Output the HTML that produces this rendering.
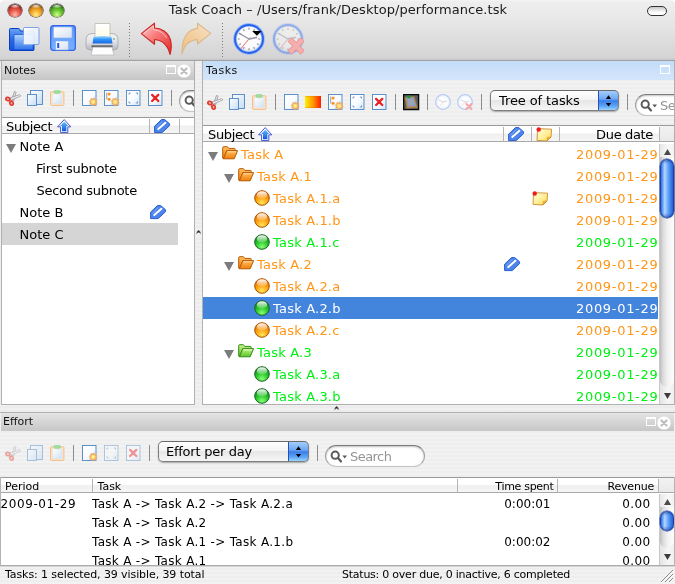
<!DOCTYPE html>
<html><head><meta charset="utf-8"><title>Task Coach</title><style>
*{box-sizing:border-box}
html,body{margin:0;padding:0}
body{width:675px;height:584px;overflow:hidden;position:relative;background:#fff;font-family:"DejaVu Sans","Liberation Sans",sans-serif;font-size:13px;color:#000}
.abs{position:absolute}
.win{will-change:transform;position:absolute;left:0;top:0;width:675px;height:584px;background:repeating-linear-gradient(#f0f0f0 0,#f0f0f0 2px,#ececec 2px,#ececec 4px);border-radius:5px 5px 0 0;overflow:hidden}
.tbar{position:absolute;left:0;top:0;width:675px;height:60px;background:linear-gradient(#f4f4f4 0,#eeeeee 2px,#e7e7e7 22px,#d4d4d4 58px,#c4c4c4 60px)}
.tline{position:absolute;left:0;top:60px;width:675px;height:1px;background:#a2a2a2}
.title{position:absolute;left:.5px;top:2.2px;letter-spacing:.06px;width:675px;text-align:center;font-size:13px;line-height:16px;color:#1a1a1a;white-space:nowrap}
.tl{position:absolute;top:3.9px;width:13.6px;height:13.6px;border-radius:50%}
.cap{position:absolute;height:19px;font-size:11px;line-height:20px;padding-left:2px;color:#111;white-space:nowrap}
.cap.g{background:linear-gradient(#e4e4e4,#c6c6c6)}
.cap.b{background:linear-gradient(#c4dcf8,#d3e5fa)}
.pane{position:absolute;background:#ececec}
.ps{background:repeating-linear-gradient(#f2f2f2 0,#f2f2f2 2px,#eeeeee 2px,#eeeeee 4px)}
.sep{position:absolute;width:1px;height:16px;background:#8c8c8c}
.hdr{position:absolute;background:linear-gradient(#fff 0,#fff 45%,#efefef 55%,#f6f6f6 100%);border-top:1px solid #9a9a9a;border-bottom:1px solid #a8a8a8;white-space:nowrap}
.hsep{position:absolute;top:1px;width:1px;background:#b4b4b4}
.t{position:absolute;white-space:nowrap;line-height:22px;height:22px}
.o{color:#ff9618}.gr{color:#00f014}.w{color:#fff}
.e{position:absolute;white-space:nowrap;font-size:12px;line-height:19px;height:19px}
.r{text-align:right}
.white{position:absolute;background:#fff}
</style></head><body>
<div class="win">
<div class="tbar"></div><div class="tline"></div>
<div class="tl" style="left:8.2px;background:radial-gradient(ellipse 42% 20% at 50% 13%,rgba(255,255,255,.9),rgba(255,255,255,0) 100%),radial-gradient(circle at 50% 82%,#ffb8a8 0,#ea5a4c 38%,#b42c24 72%,#5a1410 100%);box-shadow:0 0 0 .6px rgba(40,20,20,.8),inset 0 1px 1.5px rgba(0,0,0,.45)"></div>
<div class="tl" style="left:29.3px;background:radial-gradient(ellipse 42% 20% at 50% 13%,rgba(255,255,255,.9),rgba(255,255,255,0) 100%),radial-gradient(circle at 50% 82%,#fff08a 0,#f4a828 38%,#c07410 72%,#5a3808 100%);box-shadow:0 0 0 .6px rgba(40,20,20,.8),inset 0 1px 1.5px rgba(0,0,0,.45)"></div>
<div class="tl" style="left:50.2px;background:radial-gradient(ellipse 42% 20% at 50% 13%,rgba(255,255,255,.9),rgba(255,255,255,0) 100%),radial-gradient(circle at 50% 82%,#d0ff90 0,#6cc630 38%,#3a8c1c 72%,#143c0c 100%);box-shadow:0 0 0 .6px rgba(40,20,20,.8),inset 0 1px 1.5px rgba(0,0,0,.45)"></div>
<div class="title">Task Coach – /Users/frank/Desktop/performance.tsk</div>
<div class="abs" style="left:647px;top:6px;width:20px;height:10px;border:1px solid #333;border-radius:5px;background:linear-gradient(#c8c8c8,#fff 70%)"></div>
<svg class="abs" style="left:8px;top:26px;" width="32" height="26" viewBox="0 0 32 26">
<defs><linearGradient id="g1" x1="0" y1="0" x2="0" y2="1"><stop offset="0" stop-color="#6aa4f6"/><stop offset=".5" stop-color="#2c68e4"/><stop offset="1" stop-color="#1450da"/></linearGradient>
<linearGradient id="g2" x1="0" y1="0" x2="0" y2="1"><stop offset="0" stop-color="#b4d4fd"/><stop offset="1" stop-color="#3076ec"/></linearGradient>
<linearGradient id="g3" x1="0" y1="0" x2="1" y2="1"><stop offset="0" stop-color="#ffffff" stop-opacity=".98"/><stop offset="1" stop-color="#dce9fc" stop-opacity=".9"/></linearGradient></defs>
<path d="M1.5 3.5 Q1.5 2.5 2.5 2.5 L10.5 2.5 Q11.5 2.5 11.8 3.5 L12.3 5 L25 5 Q26 5 26 6 L26 23.5 Q26 24.5 25 24.5 L2.5 24.5 Q1.5 24.5 1.5 23.5 Z" fill="url(#g1)" stroke="#0a3ec0" stroke-width="1"/>
<path d="M6 8.5 L25 8.5 L25 23.5 L6 23.5 Z" fill="url(#g2)" stroke="#1c58dc" stroke-width=".8"/>
<rect x="15.5" y="1.5" width="15.5" height="17" rx="1" fill="url(#g3)" stroke="#5d8fe8" stroke-width=".8"/>
<rect x="15.5" y="8.5" width="10" height="10" fill="#eef4fe" opacity=".6"/>
</svg>
<svg class="abs" style="left:50px;top:25px;" width="26" height="26" viewBox="0 0 26 26">
<defs><linearGradient id="g4" x1="0" y1="0" x2="0" y2="1"><stop offset="0" stop-color="#5a98f8"/><stop offset="1" stop-color="#78b2fc"/></linearGradient>
<linearGradient id="g5" x1="0" y1="0" x2="1" y2="1"><stop offset="0" stop-color="#ffffff"/><stop offset="1" stop-color="#d6dff0"/></linearGradient></defs>
<rect x=".7" y=".7" width="24.6" height="24.6" rx="2.5" fill="url(#g4)" stroke="#3564e8" stroke-width="1.3"/>
<rect x="3.5" y="2" width="18.5" height="11" rx="1" fill="url(#g5)" stroke="#88b4f6" stroke-width=".6"/>
<rect x="5.5" y="16" width="13" height="9" fill="url(#g5)" stroke="#7aa6f0" stroke-width=".6"/>
<rect x="7.2" y="18" width="2" height="5" fill="#2458e0"/>
</svg>
<svg class="abs" style="left:84px;top:22px;" width="36" height="34" viewBox="0 0 36 34">
<defs><linearGradient id="g6" x1="0" y1="0" x2="0" y2="1"><stop offset="0" stop-color="#f4f4f6"/><stop offset=".5" stop-color="#e2e3e8"/><stop offset="1" stop-color="#b4b6be"/></linearGradient>
<linearGradient id="g7" x1="0" y1="0" x2="0" y2="1"><stop offset="0" stop-color="#a4dcff"/><stop offset=".45" stop-color="#2f94f6"/><stop offset="1" stop-color="#1a6ae4"/></linearGradient>
<linearGradient id="g8" x1="0" y1="0" x2="0" y2="1"><stop offset="0" stop-color="#ffffff"/><stop offset="1" stop-color="#fdfbe4"/></linearGradient></defs>
<path d="M2 18 Q2 11.5 9 11.5 L27 11.5 Q34 11.5 34 18 L34 24 Q34 28 30 28 L6 28 Q2 28 2 24 Z" fill="url(#g6)" stroke="#a9abb4" stroke-width=".9"/>
<path d="M11 1.5 L26 1.5 L26 16 L11 16 Z" fill="url(#g8)" stroke="#b9b9b0" stroke-width=".8"/>
<path d="M9.5 15 Q18.5 13 27.5 15 L28.5 21.5 L8.5 21.5 Z" fill="url(#g7)"/>
<rect x="7.5" y="23.4" width="21" height="1.8" fill="#55555a"/>
<path d="M9 25.2 L28 25.2 L30 33 L7 33 Z" fill="#fdfdfd" stroke="#bcbcc2" stroke-width=".8"/>
<circle cx="30" cy="17" r=".9" fill="#7fb08a"/>
</svg>
<div class="abs" style="left:129px;top:23px;width:1px;height:36px;background:repeating-linear-gradient(#7a7a7a 0,#7a7a7a 1px,transparent 1px,transparent 3px)"></div>
<div class="abs" style="left:222px;top:23px;width:1px;height:36px;background:repeating-linear-gradient(#7a7a7a 0,#7a7a7a 1px,transparent 1px,transparent 3px)"></div>
<svg class="abs" style="left:139px;top:21px;" width="36" height="36" viewBox="0 0 36 36">
<defs><linearGradient id="g9" x1="0" y1="0" x2="1" y2="1"><stop offset="0" stop-color="#ffd2d2"/><stop offset=".4" stop-color="#f98080"/><stop offset="1" stop-color="#e22626"/></linearGradient></defs>
<path d="M2.3 12.6 L15.5 2.2 L15.5 7 C22 7 29 11 31.5 19 C32.8 24 32.4 29 31 33.5 C29.5 27 25.5 19.5 15.5 18.5 L15.5 23.2 Z" fill="url(#g9)" stroke="#cc2422" stroke-width="1.1" stroke-linejoin="round"/>
<path d="M4.6 12.5 L14.3 4.9 L14.3 8.8 C20 9 25 12 27.5 17" fill="none" stroke="#ffd4d4" stroke-width="1" opacity=".8"/>
</svg>
<svg class="abs" style="left:177px;top:21px;" width="36" height="36" viewBox="0 0 36 36">
<defs><linearGradient id="g10" x1="1" y1="0" x2="0" y2="1"><stop offset="0" stop-color="#f4e2cc"/><stop offset=".5" stop-color="#f4cf9f"/><stop offset="1" stop-color="#f0c080"/></linearGradient></defs>
<path d="M33.7 12.4 L20.5 2.2 L20.5 7.6 C12 8 4.5 15 5 33 C7 24.5 11.5 19 20.5 18.6 L20.5 23 Z" fill="url(#g10)" stroke="#dcb888" stroke-width="1.1" stroke-linejoin="round"/>
</svg>
<svg class="abs" style="left:233px;top:23px;" width="32" height="32" viewBox="0 0 32 32"><defs><radialGradient id="g11" cx=".5" cy=".4" r=".6"><stop offset="0" stop-color="#ffffff"/><stop offset=".8" stop-color="#fafafc"/><stop offset="1" stop-color="#d6dcea"/></radialGradient></defs>
<g>
<circle cx="16" cy="16" r="15.9" fill="#9dbcf8"/>
<circle cx="16" cy="16" r="15" fill="#2a63ea"/>
<circle cx="16" cy="16" r="13.1" fill="#7eaaf8"/>
<circle cx="16" cy="16" r="12.4" fill="url(#g11)"/>
<line x1="16.00" y1="4.80" x2="16.00" y2="6.70" stroke="#8a8a92" stroke-width="1.1"/><line x1="21.60" y1="6.30" x2="20.65" y2="7.95" stroke="#8a8a92" stroke-width="1.1"/><line x1="25.70" y1="10.40" x2="24.05" y2="11.35" stroke="#8a8a92" stroke-width="1.1"/><line x1="27.20" y1="16.00" x2="25.30" y2="16.00" stroke="#8a8a92" stroke-width="1.1"/><line x1="25.70" y1="21.60" x2="24.05" y2="20.65" stroke="#8a8a92" stroke-width="1.1"/><line x1="21.60" y1="25.70" x2="20.65" y2="24.05" stroke="#8a8a92" stroke-width="1.1"/><line x1="16.00" y1="27.20" x2="16.00" y2="25.30" stroke="#8a8a92" stroke-width="1.1"/><line x1="10.40" y1="25.70" x2="11.35" y2="24.05" stroke="#8a8a92" stroke-width="1.1"/><line x1="6.30" y1="21.60" x2="7.95" y2="20.65" stroke="#8a8a92" stroke-width="1.1"/><line x1="4.80" y1="16.00" x2="6.70" y2="16.00" stroke="#8a8a92" stroke-width="1.1"/><line x1="6.30" y1="10.40" x2="7.95" y2="11.35" stroke="#8a8a92" stroke-width="1.1"/><line x1="10.40" y1="6.30" x2="11.35" y2="7.95" stroke="#8a8a92" stroke-width="1.1"/>
<line x1="16" y1="16" x2="5.8" y2="10" stroke="#8e8ea6" stroke-width="1.3"/>
<line x1="16" y1="16" x2="24" y2="14.4" stroke="#9a9aae" stroke-width="1.6"/>
<line x1="17.2" y1="14.4" x2="7.8" y2="25.8" stroke="#f26a6a" stroke-width="1"/>
<circle cx="16" cy="16" r="1.2" fill="#a0a0b0"/>
</g><path d="M19.2 8 L28.6 8 L23.9 12.8 Z" fill="#000"/></svg>
<svg class="abs" style="left:272.3px;top:23px;" width="32" height="32" viewBox="0 0 32 32"><defs><radialGradient id="g12" cx=".5" cy=".4" r=".6"><stop offset="0" stop-color="#ffffff"/><stop offset=".8" stop-color="#fafafc"/><stop offset="1" stop-color="#d6dcea"/></radialGradient></defs>
<g opacity=".42">
<circle cx="16" cy="16" r="15.9" fill="#9dbcf8"/>
<circle cx="16" cy="16" r="15" fill="#2a63ea"/>
<circle cx="16" cy="16" r="13.1" fill="#7eaaf8"/>
<circle cx="16" cy="16" r="12.4" fill="url(#g12)"/>
<line x1="16.00" y1="4.80" x2="16.00" y2="6.70" stroke="#8a8a92" stroke-width="1.1"/><line x1="21.60" y1="6.30" x2="20.65" y2="7.95" stroke="#8a8a92" stroke-width="1.1"/><line x1="25.70" y1="10.40" x2="24.05" y2="11.35" stroke="#8a8a92" stroke-width="1.1"/><line x1="27.20" y1="16.00" x2="25.30" y2="16.00" stroke="#8a8a92" stroke-width="1.1"/><line x1="25.70" y1="21.60" x2="24.05" y2="20.65" stroke="#8a8a92" stroke-width="1.1"/><line x1="21.60" y1="25.70" x2="20.65" y2="24.05" stroke="#8a8a92" stroke-width="1.1"/><line x1="16.00" y1="27.20" x2="16.00" y2="25.30" stroke="#8a8a92" stroke-width="1.1"/><line x1="10.40" y1="25.70" x2="11.35" y2="24.05" stroke="#8a8a92" stroke-width="1.1"/><line x1="6.30" y1="21.60" x2="7.95" y2="20.65" stroke="#8a8a92" stroke-width="1.1"/><line x1="4.80" y1="16.00" x2="6.70" y2="16.00" stroke="#8a8a92" stroke-width="1.1"/><line x1="6.30" y1="10.40" x2="7.95" y2="11.35" stroke="#8a8a92" stroke-width="1.1"/><line x1="10.40" y1="6.30" x2="11.35" y2="7.95" stroke="#8a8a92" stroke-width="1.1"/>
<line x1="16" y1="16" x2="5.8" y2="10" stroke="#8e8ea6" stroke-width="1.3"/>
<line x1="16" y1="16" x2="24" y2="14.4" stroke="#9a9aae" stroke-width="1.6"/>
<line x1="17.2" y1="14.4" x2="7.8" y2="25.8" stroke="#f26a6a" stroke-width="1"/>
<circle cx="16" cy="16" r="1.2" fill="#a0a0b0"/>
</g><path d="M17.6 16.4 L30.8 29.6 M30.8 16.4 L17.6 29.6" stroke="#e99494" stroke-width="5.8"/><path d="M18 16.8 L30.4 29.2 M30.4 16.8 L18 29.2" stroke="#f4aeae" stroke-width="4.2"/></svg>
<div class="abs ps" style="left:1px;top:61px;width:194px;height:344px;border-left:1px solid #b0b0b0;border-right:1px solid #b0b0b0;border-bottom:1px solid #b0b0b0"></div>
<div class="cap g" style="left:2px;top:61px;width:192px">Notes</div>
<div class="abs" style="left:166px;top:65px;width:9.5px;height:8.5px;border:1px solid #fff;border-top-width:2px;opacity:.95"></div><svg class="abs" style="left:177px;top:63.5px;" width="14" height="14" viewBox="0 0 14 14"><circle cx="7" cy="7" r="6.6" fill="#fff"/><path d="M4.4 4.4 L9.6 9.6 M9.6 4.4 L4.4 9.6" stroke="#bdbdbd" stroke-width="2.1" stroke-linecap="round"/></svg>
<svg class="abs" style="left:5px;top:90px;" width="17" height="17" viewBox="0 0 17 17"><g>
<path d="M6.2 11.4 L9.4 1.6 Q10.6 1.2 11 2.4 L8.6 11 Z" fill="#e4e4e8" stroke="#8a8a92" stroke-width=".7" stroke-linejoin="round"/>
<path d="M4.4 8.2 L14.6 4.6 Q15.8 5 15.4 6.2 L6 10.2 Z" fill="#f0f0f2" stroke="#8a8a92" stroke-width=".7" stroke-linejoin="round"/>
<ellipse cx="2.9" cy="9" rx="1.6" ry="2.1" transform="rotate(-65 2.9 9)" fill="#f6b0a4" stroke="#de4034" stroke-width="1.7"/>
<ellipse cx="6.5" cy="13.2" rx="1.7" ry="2" transform="rotate(-20 6.5 13.2)" fill="#f6b0a4" stroke="#de4034" stroke-width="1.7"/>
</g></svg>
<svg class="abs" style="left:27px;top:90px;" width="17" height="17" viewBox="0 0 17 17"><defs><linearGradient id="g13" x1="0" y1="0" x2="1" y2="1"><stop offset="0" stop-color="#ffffff"/><stop offset="1" stop-color="#c4dcf4"/></linearGradient></defs><g>
<rect x="3.5" y=".5" width="12" height="14" fill="url(#g13)" stroke="#4d86c4" stroke-width=".9"/>
<rect x=".5" y="4.5" width="9" height="11" fill="url(#g13)" stroke="#4d86c4" stroke-width=".9"/></g></svg>
<svg class="abs" style="left:50px;top:90px;" width="15" height="17" viewBox="0 0 15 17"><defs><linearGradient id="g14" x1="0" y1="0" x2="1" y2="1"><stop offset="0" stop-color="#ffffff"/><stop offset="1" stop-color="#cfe0f4"/></linearGradient></defs>
<rect x=".6" y="1.8" width="13.3" height="13.6" rx=".8" fill="#fde6cc" stroke="#f3bc84" stroke-width="1"/>
<rect x="2.6" y="4" width="9.4" height="9.6" fill="url(#g14)" stroke="#d8e2ee" stroke-width=".5"/>
<rect x="4.2" y=".4" width="6" height="2.9" rx="1" fill="#9ce29e" stroke="#74cc7c" stroke-width=".5"/></svg>
<div class="sep" style="left:73px;top:90px"></div>
<svg class="abs" style="left:82px;top:90px;" width="18" height="18" viewBox="0 0 18 18"><defs><linearGradient id="g15" x1="0" y1="0" x2="1" y2="1"><stop offset="0" stop-color="#ffffff"/><stop offset=".55" stop-color="#f8fbff"/><stop offset="1" stop-color="#cfe2f6"/></linearGradient></defs><rect x=".5" y=".5" width="13.5" height="15" fill="url(#g15)" stroke="#4d86c4" stroke-width=".9"/><defs><radialGradient id="g16"><stop offset="0" stop-color="#ffff9a"/><stop offset=".38" stop-color="#fde07a"/><stop offset=".6" stop-color="#f4b060"/><stop offset="1" stop-color="#f0a868"/></radialGradient></defs><polygon points="12.02,7.68 12.91,9.31 14.76,9.50 14.24,11.28 15.42,12.72 13.79,13.61 13.60,15.46 11.82,14.94 10.38,16.12 9.49,14.49 7.64,14.30 8.16,12.52 6.98,11.08 8.61,10.19 8.80,8.34 10.58,8.86" fill="url(#g16)" stroke="#eeaa6c" stroke-width=".4" stroke-linejoin="round"/></svg>
<svg class="abs" style="left:104px;top:90px;" width="18" height="18" viewBox="0 0 18 18"><defs><linearGradient id="g17" x1="0" y1="0" x2="1" y2="1"><stop offset="0" stop-color="#ffffff"/><stop offset=".55" stop-color="#f8fbff"/><stop offset="1" stop-color="#cfe2f6"/></linearGradient></defs><rect x=".5" y=".5" width="13.5" height="15" fill="url(#g17)" stroke="#4d86c4" stroke-width=".9"/><path d="M2.7 2.6 L2.7 9.6" fill="none" stroke="#a4a4a4" stroke-width="1.1"/><circle cx="5.1" cy="3.9" r="1.5" fill="#f8921c"/><circle cx="5.1" cy="9.3" r="1.5" fill="#f8921c"/><defs><radialGradient id="g18"><stop offset="0" stop-color="#ffff9a"/><stop offset=".38" stop-color="#fde07a"/><stop offset=".6" stop-color="#f4b060"/><stop offset="1" stop-color="#f0a868"/></radialGradient></defs><polygon points="12.02,7.68 12.91,9.31 14.76,9.50 14.24,11.28 15.42,12.72 13.79,13.61 13.60,15.46 11.82,14.94 10.38,16.12 9.49,14.49 7.64,14.30 8.16,12.52 6.98,11.08 8.61,10.19 8.80,8.34 10.58,8.86" fill="url(#g18)" stroke="#eeaa6c" stroke-width=".4" stroke-linejoin="round"/></svg>
<svg class="abs" style="left:126px;top:90px;" width="16" height="17" viewBox="0 0 16 17"><defs><linearGradient id="g19" x1="0" y1="0" x2="1" y2="1"><stop offset="0" stop-color="#ffffff"/><stop offset=".55" stop-color="#f8fbff"/><stop offset="1" stop-color="#cfe2f6"/></linearGradient></defs><g><rect x=".5" y=".5" width="13.5" height="15" fill="url(#g19)" stroke="#4d86c4" stroke-width=".9"/><path d="M3 4.6 L3 3 L4.6 3 M9.9 3 L11.5 3 L11.5 4.6 M3 11.4 L3 13 L4.6 13 M9.9 13 L11.5 13 L11.5 11.4" fill="none" stroke="#44689a" stroke-width=".8" opacity=".8"/></g></svg>
<svg class="abs" style="left:148px;top:90px;" width="16" height="17" viewBox="0 0 16 17"><defs><linearGradient id="g20" x1="0" y1="0" x2="1" y2="1"><stop offset="0" stop-color="#ffffff"/><stop offset=".55" stop-color="#f8fbff"/><stop offset="1" stop-color="#cfe2f6"/></linearGradient></defs><g><rect x=".5" y=".5" width="13.5" height="15" fill="url(#g20)" stroke="#4d86c4" stroke-width=".9"/><path d="M4.1 4.9 L10.3 11 M10.3 4.9 L4.1 11" stroke="#ea2424" stroke-width="2.3" stroke-linecap="round"/></g></svg>
<div class="sep" style="left:171px;top:90px"></div>
<div class="abs" style="left:179px;top:90px;width:30px;height:22px;;width:15px;overflow:hidden"><div class="abs" style="left:0;top:0;width:30px;height:22px;border-radius:11px;border:1px solid #a0a0a0;border-top-color:#7c7c7c;border-bottom-color:#c4c4c4;background:#fff;box-shadow:inset 0 1px 2px rgba(0,0,0,.25)"></div><svg class="abs" style="left:4.5px;top:4.5px;" width="18" height="14" viewBox="0 0 18 14"><circle cx="5.2" cy="5.2" r="3.6" fill="none" stroke="#5a5a5a" stroke-width="2"/><path d="M7.8 7.8 L11 11.4" stroke="#5a5a5a" stroke-width="2.2" stroke-linecap="round"/><path d="M12.4 5.6 L17 5.6 L14.7 8.4 Z" fill="#5a5a5a"/></svg></div>
<div class="white" style="left:2px;top:117px;width:192px;height:287px"></div>
<div class="hdr" style="left:2px;top:117px;width:192px;height:17px"><span class="abs" style="left:4px;top:.5px;line-height:16px;letter-spacing:-.35px">Subject</span><div class="hsep" style="left:147px;height:15px"></div><div class="hsep" style="left:177px;height:15px"></div></div>
<svg class="abs" style="left:57px;top:119px;" width="15" height="15" viewBox="0 0 15 15"><defs><linearGradient id="g21" x1="0" y1="0" x2="0" y2="1"><stop offset="0" stop-color="#5cbcff"/><stop offset="1" stop-color="#0c58dc"/></linearGradient></defs>
<path d="M7.2 .6 L13.8 7.8 L10.8 7.8 L10.8 13.6 L3.6 13.6 L3.6 7.8 L.6 7.8 Z" fill="#fff" stroke="#4452d4" stroke-width="1" stroke-linejoin="round"/>
<path d="M7.2 2.8 L11.2 7 L9.4 7 L9.4 12.2 L5 12.2 L5 7 L3.2 7 Z" fill="url(#g21)"/></svg>
<svg class="abs" style="left:153.7px;top:119px" width="17" height="14" viewBox="0 0 17 14"><path d="M.6 13.6 L.6 7.2 L7.6 .5 L10.6 .5 L15.6 4.8 L15.6 6.6 L8.2 13.6 Z" fill="#4c84ea" stroke="#2a5cd2" stroke-width="1" stroke-linejoin="round"/>
<path d="M4.3 10.1 L11.4 3.7" stroke="#fff" stroke-width="2" stroke-linecap="round"/>
<path d="M2.4 8.4 L8.2 2.6" stroke="#8cb4f4" stroke-width=".8"/></svg>
<div class="abs" style="left:2px;top:223px;width:176px;height:22px;background:#d5d5d5"></div>
<svg class="abs" style="left:6px;top:144px;" width="10" height="9" viewBox="0 0 10 9"><path d="M0 0 L10 0 L5 9 Z" fill="#7c7c7c"/></svg>
<div class="t" style="left:19.5px;top:135.5px;letter-spacing:0px">Note A</div>
<div class="t" style="left:36px;top:157.5px;letter-spacing:-0.25px">First subnote</div>
<div class="t" style="left:36.5px;top:179.5px;letter-spacing:-0.3px">Second subnote</div>
<div class="t" style="left:19.5px;top:201.5px;letter-spacing:0px">Note B</div>
<div class="t" style="left:19.5px;top:223.5px;letter-spacing:0px">Note C</div>
<svg class="abs" style="left:150px;top:205px" width="17" height="15" viewBox="0 0 17 15"><path d="M.6 13.6 L.6 7.2 L7.6 .5 L10.6 .5 L15.6 4.8 L15.6 6.6 L8.2 13.6 Z" fill="#4c84ea" stroke="#2a5cd2" stroke-width="1" stroke-linejoin="round"/>
<path d="M4.3 10.1 L11.4 3.7" stroke="#fff" stroke-width="2" stroke-linecap="round"/>
<path d="M2.4 8.4 L8.2 2.6" stroke="#8cb4f4" stroke-width=".8"/></svg>
<svg class="abs" style="left:196px;top:229.4px;" width="6" height="6" viewBox="0 0 6 6"><path d="M.6 4.4 Q2.6 -1.4 4.6 4.4 Q2.6 2.2 .6 4.4 Z" fill="#2a2a2a" stroke="#2a2a2a" stroke-width=".5"/><path d="M1 5.4 Q2.6 4 4.4 5.4" fill="none" stroke="#fff" stroke-width=".8"/></svg>
<div class="abs ps" style="left:202px;top:61px;width:473px;height:344px;border-left:1px solid #b0b0b0;border-right:1px solid #b0b0b0;border-bottom:1px solid #b0b0b0"></div>
<div class="cap b" style="left:203px;top:61px;width:471px;padding-left:3px;letter-spacing:.45px">Tasks</div>
<div class="abs" style="left:660px;top:65px;width:9.5px;height:8.5px;border:1px solid #fff;border-top-width:2px;opacity:.95"></div>
<svg class="abs" style="left:207px;top:94px;" width="17" height="17" viewBox="0 0 17 17"><g>
<path d="M6.2 11.4 L9.4 1.6 Q10.6 1.2 11 2.4 L8.6 11 Z" fill="#e4e4e8" stroke="#8a8a92" stroke-width=".7" stroke-linejoin="round"/>
<path d="M4.4 8.2 L14.6 4.6 Q15.8 5 15.4 6.2 L6 10.2 Z" fill="#f0f0f2" stroke="#8a8a92" stroke-width=".7" stroke-linejoin="round"/>
<ellipse cx="2.9" cy="9" rx="1.6" ry="2.1" transform="rotate(-65 2.9 9)" fill="#f6b0a4" stroke="#de4034" stroke-width="1.7"/>
<ellipse cx="6.5" cy="13.2" rx="1.7" ry="2" transform="rotate(-20 6.5 13.2)" fill="#f6b0a4" stroke="#de4034" stroke-width="1.7"/>
</g></svg>
<svg class="abs" style="left:229px;top:94px;" width="17" height="17" viewBox="0 0 17 17"><defs><linearGradient id="g22" x1="0" y1="0" x2="1" y2="1"><stop offset="0" stop-color="#ffffff"/><stop offset="1" stop-color="#c4dcf4"/></linearGradient></defs><g>
<rect x="3.5" y=".5" width="12" height="14" fill="url(#g22)" stroke="#4d86c4" stroke-width=".9"/>
<rect x=".5" y="4.5" width="9" height="11" fill="url(#g22)" stroke="#4d86c4" stroke-width=".9"/></g></svg>
<svg class="abs" style="left:252px;top:94px;" width="15" height="17" viewBox="0 0 15 17"><defs><linearGradient id="g23" x1="0" y1="0" x2="1" y2="1"><stop offset="0" stop-color="#ffffff"/><stop offset="1" stop-color="#cfe0f4"/></linearGradient></defs>
<rect x=".6" y="1.8" width="13.3" height="13.6" rx=".8" fill="#fde6cc" stroke="#f3bc84" stroke-width="1"/>
<rect x="2.6" y="4" width="9.4" height="9.6" fill="url(#g23)" stroke="#d8e2ee" stroke-width=".5"/>
<rect x="4.2" y=".4" width="6" height="2.9" rx="1" fill="#9ce29e" stroke="#74cc7c" stroke-width=".5"/></svg>
<div class="sep" style="left:275px;top:94px"></div>
<svg class="abs" style="left:284px;top:94px;" width="18" height="18" viewBox="0 0 18 18"><defs><linearGradient id="g24" x1="0" y1="0" x2="1" y2="1"><stop offset="0" stop-color="#ffffff"/><stop offset=".55" stop-color="#f8fbff"/><stop offset="1" stop-color="#cfe2f6"/></linearGradient></defs><rect x=".5" y=".5" width="13.5" height="15" fill="url(#g24)" stroke="#4d86c4" stroke-width=".9"/><defs><radialGradient id="g25"><stop offset="0" stop-color="#ffff9a"/><stop offset=".38" stop-color="#fde07a"/><stop offset=".6" stop-color="#f4b060"/><stop offset="1" stop-color="#f0a868"/></radialGradient></defs><polygon points="12.02,7.68 12.91,9.31 14.76,9.50 14.24,11.28 15.42,12.72 13.79,13.61 13.60,15.46 11.82,14.94 10.38,16.12 9.49,14.49 7.64,14.30 8.16,12.52 6.98,11.08 8.61,10.19 8.80,8.34 10.58,8.86" fill="url(#g25)" stroke="#eeaa6c" stroke-width=".4" stroke-linejoin="round"/></svg>
<div class="abs" style="left:305px;top:96px;width:16px;height:12px;background:linear-gradient(rgba(200,90,0,.35),rgba(255,255,255,0) 12%,rgba(255,255,255,0) 88%,rgba(200,90,0,.35)),linear-gradient(90deg,#fff000,#ff9800 50%,#ff1c00)"></div>
<svg class="abs" style="left:328px;top:94px;" width="18" height="18" viewBox="0 0 18 18"><defs><linearGradient id="g26" x1="0" y1="0" x2="1" y2="1"><stop offset="0" stop-color="#ffffff"/><stop offset=".55" stop-color="#f8fbff"/><stop offset="1" stop-color="#cfe2f6"/></linearGradient></defs><rect x=".5" y=".5" width="13.5" height="15" fill="url(#g26)" stroke="#4d86c4" stroke-width=".9"/><path d="M2.7 2.6 L2.7 9.6" fill="none" stroke="#a4a4a4" stroke-width="1.1"/><circle cx="5.1" cy="3.9" r="1.5" fill="#f8921c"/><circle cx="5.1" cy="9.3" r="1.5" fill="#f8921c"/><defs><radialGradient id="g27"><stop offset="0" stop-color="#ffff9a"/><stop offset=".38" stop-color="#fde07a"/><stop offset=".6" stop-color="#f4b060"/><stop offset="1" stop-color="#f0a868"/></radialGradient></defs><polygon points="12.02,7.68 12.91,9.31 14.76,9.50 14.24,11.28 15.42,12.72 13.79,13.61 13.60,15.46 11.82,14.94 10.38,16.12 9.49,14.49 7.64,14.30 8.16,12.52 6.98,11.08 8.61,10.19 8.80,8.34 10.58,8.86" fill="url(#g27)" stroke="#eeaa6c" stroke-width=".4" stroke-linejoin="round"/></svg>
<svg class="abs" style="left:350px;top:94px;" width="16" height="17" viewBox="0 0 16 17"><defs><linearGradient id="g28" x1="0" y1="0" x2="1" y2="1"><stop offset="0" stop-color="#ffffff"/><stop offset=".55" stop-color="#f8fbff"/><stop offset="1" stop-color="#cfe2f6"/></linearGradient></defs><g><rect x=".5" y=".5" width="13.5" height="15" fill="url(#g28)" stroke="#4d86c4" stroke-width=".9"/><path d="M3 4.6 L3 3 L4.6 3 M9.9 3 L11.5 3 L11.5 4.6 M3 11.4 L3 13 L4.6 13 M9.9 13 L11.5 13 L11.5 11.4" fill="none" stroke="#44689a" stroke-width=".8" opacity=".8"/></g></svg>
<svg class="abs" style="left:372px;top:94px;" width="16" height="17" viewBox="0 0 16 17"><defs><linearGradient id="g29" x1="0" y1="0" x2="1" y2="1"><stop offset="0" stop-color="#ffffff"/><stop offset=".55" stop-color="#f8fbff"/><stop offset="1" stop-color="#cfe2f6"/></linearGradient></defs><g><rect x=".5" y=".5" width="13.5" height="15" fill="url(#g29)" stroke="#4d86c4" stroke-width=".9"/><path d="M4.1 4.9 L10.3 11 M10.3 4.9 L4.1 11" stroke="#ea2424" stroke-width="2.3" stroke-linecap="round"/></g></svg>
<div class="sep" style="left:395px;top:94px"></div>
<svg class="abs" style="left:403px;top:94px;" width="17" height="17" viewBox="0 0 17 17"><rect x=".6" y=".6" width="15" height="15" fill="#5c5c5e" stroke="#060606" stroke-width="1.3"/>
<path d="M1.8 3.4 L11.2 2.4 L14.4 13.4 L4 14.2 Z" fill="#c08a3c" stroke="#b07430" stroke-width=".6" stroke-linejoin="round"/>
<path d="M3 3.6 L10.6 2.9 L13.4 12.2 L5 13 Z" fill="#8e98b2"/>
<path d="M4.4 5.2 L9.8 4.7 L11.8 11 L6 11.6 Z" fill="#9aa4bc"/>
<ellipse cx="5.8" cy="2.8" rx="2.1" ry="1.4" fill="#1e9a34"/></svg>
<div class="sep" style="left:427px;top:94px"></div>
<svg class="abs" style="left:435px;top:94px;" width="17" height="17" viewBox="0 0 17 17"><circle cx="8" cy="8" r="7.3" fill="#fcfdff" stroke="#b4c8f0" stroke-width="1.2"/>
<circle cx="8" cy="8" r="6.2" fill="none" stroke="#dfe8f8" stroke-width=".8"/>
<path d="M8 8 L3.4 5.6 M8 8 L12 7" stroke="#cfd2de" stroke-width=".9" fill="none"/>
<path d="M8.4 7.6 L4.8 12" stroke="#f8c8c8" stroke-width=".7"/></svg>
<svg class="abs" style="left:457px;top:94px;" width="17" height="17" viewBox="0 0 17 17"><circle cx="8" cy="8" r="7.3" fill="#fcfdff" stroke="#b4c8f0" stroke-width="1.2"/>
<circle cx="8" cy="8" r="6.2" fill="none" stroke="#dfe8f8" stroke-width=".8"/>
<path d="M8 8 L3.4 5.6 M8 8 L12 7" stroke="#cfd2de" stroke-width=".9" fill="none"/>
<path d="M8.4 7.6 L4.8 12" stroke="#f8c8c8" stroke-width=".7"/><path d="M9.4 10 L14.4 15 M14.4 10 L9.4 15" stroke="#f2aaaa" stroke-width="2.2" stroke-linecap="round"/></svg>
<div class="sep" style="left:481px;top:94px"></div>
<div class="abs" style="left:490px;top:90px;width:129px;height:21px;border-radius:5px;border:1px solid #7e7e7e;border-top-color:#6a6a6a;background:linear-gradient(#fff 0,#f4f4f4 45%,#e6e6e6 50%,#f6f6f6 100%);box-shadow:0 1px 1.5px rgba(0,0,0,.3);overflow:hidden"><span class="abs" style="left:8px;top:1px;line-height:18px;font-size:13px;white-space:nowrap;letter-spacing:-0.1px">Tree of tasks</span><div class="abs" style="right:-1px;top:-1px;width:21px;height:21px;border-radius:0 5px 5px 0;border:1px solid #2a4fb8;background:linear-gradient(#a4cdfc 0,#6ea8f4 42%,#3a7ee8 52%,#5ea6f6 80%,#9ad6ff 100%)"></div><svg class="abs" style="right:5.2px;top:3px" width="9" height="14" viewBox="0 0 9 14"><path d="M4.5 1.2 L7.1 4.9 L1.9 4.9 Z M4.5 12.6 L7.1 8.9 L1.9 8.9 Z" fill="#000"/></svg></div>
<div class="sep" style="left:627px;top:94px"></div>
<div class="abs" style="left:635px;top:94px;width:60px;height:22px;;width:39px;overflow:hidden"><div class="abs" style="left:0;top:0;width:60px;height:22px;border-radius:11px;border:1px solid #a0a0a0;border-top-color:#7c7c7c;border-bottom-color:#c4c4c4;background:#fff;box-shadow:inset 0 1px 2px rgba(0,0,0,.25)"></div><svg class="abs" style="left:4.5px;top:4.5px;" width="18" height="14" viewBox="0 0 18 14"><circle cx="5.2" cy="5.2" r="3.6" fill="none" stroke="#5a5a5a" stroke-width="2"/><path d="M7.8 7.8 L11 11.4" stroke="#5a5a5a" stroke-width="2.2" stroke-linecap="round"/><path d="M12.4 5.6 L17 5.6 L14.7 8.4 Z" fill="#5a5a5a"/></svg><span class="abs" style="left:25px;top:3px;line-height:17px;font-size:13px;color:#959595;letter-spacing:-.55px">Se</span></div>
<div class="white" style="left:203px;top:125px;width:471px;height:279px"></div>
<div class="hdr" style="left:203px;top:125px;width:471px;height:17px"><span class="abs" style="left:5px;top:.5px;line-height:16px;letter-spacing:-.35px">Subject</span><div class="hsep" style="left:300px;height:15px"></div><div class="hsep" style="left:328px;height:15px"></div><div class="hsep" style="left:356px;height:15px"></div><div class="hsep" style="left:456px;height:15px"></div><span class="abs r" style="left:355px;width:95px;top:.5px;line-height:16px;letter-spacing:-.35px">Due date</span></div>
<div class="abs" style="left:660px;top:126px;width:14px;height:15px;background:linear-gradient(#f2f2f2,#e9e9e9)"></div>
<svg class="abs" style="left:258px;top:127px;" width="15" height="15" viewBox="0 0 15 15"><defs><linearGradient id="g31" x1="0" y1="0" x2="0" y2="1"><stop offset="0" stop-color="#5cbcff"/><stop offset="1" stop-color="#0c58dc"/></linearGradient></defs>
<path d="M7.2 .6 L13.8 7.8 L10.8 7.8 L10.8 13.6 L3.6 13.6 L3.6 7.8 L.6 7.8 Z" fill="#fff" stroke="#4452d4" stroke-width="1" stroke-linejoin="round"/>
<path d="M7.2 2.8 L11.2 7 L9.4 7 L9.4 12.2 L5 12.2 L5 7 L3.2 7 Z" fill="url(#g31)"/></svg>
<svg class="abs" style="left:508px;top:127.4px" width="17" height="13.6" viewBox="0 0 17 13.6"><path d="M.6 13.6 L.6 7.2 L7.6 .5 L10.6 .5 L15.6 4.8 L15.6 6.6 L8.2 13.6 Z" fill="#4c84ea" stroke="#2a5cd2" stroke-width="1" stroke-linejoin="round"/>
<path d="M4.3 10.1 L11.4 3.7" stroke="#fff" stroke-width="2" stroke-linecap="round"/>
<path d="M2.4 8.4 L8.2 2.6" stroke="#8cb4f4" stroke-width=".8"/></svg>
<svg class="abs" style="left:535.6px;top:127px" width="17" height="14" viewBox="0 0 17 14"><defs><linearGradient id="g32" x1="0" y1="0" x2="1" y2="1"><stop offset="0" stop-color="#fffcd8"/><stop offset=".5" stop-color="#fff0a0"/><stop offset="1" stop-color="#ffd840"/></linearGradient></defs>
<path d="M1.6 1.6 L15.6 2.2 L15 10 L11 14 L1 13.4 Z" fill="url(#g32)" stroke="#cc8c2c" stroke-width=".9" stroke-linejoin="round"/>
<path d="M15 10 L11.4 10.4 L11 14 Z" fill="#f4b438" stroke="#cc8c2c" stroke-width=".6"/>
<circle cx="2.7" cy="2.5" r="2.2" fill="#ec1c1c"/></svg>
<div class="abs" style="left:203px;top:297px;width:455px;height:22px;background:#4384dd"></div>
<svg class="abs" style="left:208px;top:152px;" width="10" height="9" viewBox="0 0 10 9"><path d="M0 0 L10 0 L5 9 Z" fill="#7c7c7c"/></svg>
<svg class="abs" style="left:222px;top:146px;" width="17" height="14" viewBox="0 0 17 14"><defs><linearGradient id="g33" x1="0" y1="0" x2="0" y2="1"><stop offset="0" stop-color="#ffc060"/><stop offset="1" stop-color="#f07c08"/></linearGradient></defs>
<path d="M.7 12.2 L.7 1.6 Q.7 .7 1.6 .7 L5.4 .7 L6.8 2.4 L12.4 2.4 Q13.2 2.4 13.2 3.2 L13.2 5 L4.6 5 L2 12.6 Z" fill="url(#g33)" stroke="#b45a06" stroke-width="1" stroke-linejoin="round"/>
<path d="M1.4 12.8 L4.8 4.6 L15.6 4.6 L12.2 12.8 Z" fill="url(#g33)" stroke="#b45a06" stroke-width="1" stroke-linejoin="round"/>
<path d="M5.6 5.8 L13.8 5.8" stroke="#ffe0a8" stroke-width=".9"/></svg>
<div class="t o" style="left:241px;top:144px;letter-spacing:.2px">Task A</div>
<div class="t o" style="left:576px;top:144px;letter-spacing:.68px">2009-01-29</div>
<svg class="abs" style="left:224px;top:174px;" width="10" height="9" viewBox="0 0 10 9"><path d="M0 0 L10 0 L5 9 Z" fill="#7c7c7c"/></svg>
<svg class="abs" style="left:238px;top:168px;" width="17" height="14" viewBox="0 0 17 14"><defs><linearGradient id="g34" x1="0" y1="0" x2="0" y2="1"><stop offset="0" stop-color="#ffc060"/><stop offset="1" stop-color="#f07c08"/></linearGradient></defs>
<path d="M.7 12.2 L.7 1.6 Q.7 .7 1.6 .7 L5.4 .7 L6.8 2.4 L12.4 2.4 Q13.2 2.4 13.2 3.2 L13.2 5 L4.6 5 L2 12.6 Z" fill="url(#g34)" stroke="#b45a06" stroke-width="1" stroke-linejoin="round"/>
<path d="M1.4 12.8 L4.8 4.6 L15.6 4.6 L12.2 12.8 Z" fill="url(#g34)" stroke="#b45a06" stroke-width="1" stroke-linejoin="round"/>
<path d="M5.6 5.8 L13.8 5.8" stroke="#ffe0a8" stroke-width=".9"/></svg>
<div class="t o" style="left:257px;top:166px;letter-spacing:.2px">Task A.1</div>
<div class="t o" style="left:576px;top:166px;letter-spacing:.68px">2009-01-29</div>
<svg class="abs" style="left:254px;top:190px;" width="16" height="16" viewBox="0 0 16 16"><defs><radialGradient id="g35" cx=".5" cy=".85" r=".75"><stop offset="0" stop-color="#ffe860"/><stop offset=".55" stop-color="#ffa010"/><stop offset="1" stop-color="#e87400"/></radialGradient>
<linearGradient id="g36" x1="0" y1="0" x2="0" y2="1"><stop offset="0" stop-color="#fff" stop-opacity=".98"/><stop offset="1" stop-color="#fff" stop-opacity=".15"/></linearGradient></defs>
<circle cx="8" cy="8" r="7.3" fill="url(#g35)" stroke="#a85400" stroke-width="1"/>
<ellipse cx="8" cy="4.9" rx="5.2" ry="3.7" fill="url(#g36)"/></svg>
<div class="t o" style="left:273px;top:188px;letter-spacing:.2px">Task A.1.a</div>
<div class="t o" style="left:576px;top:188px;letter-spacing:.68px">2009-01-29</div>
<svg class="abs" style="left:254px;top:212px;" width="16" height="16" viewBox="0 0 16 16"><defs><radialGradient id="g37" cx=".5" cy=".85" r=".75"><stop offset="0" stop-color="#ffe860"/><stop offset=".55" stop-color="#ffa010"/><stop offset="1" stop-color="#e87400"/></radialGradient>
<linearGradient id="g38" x1="0" y1="0" x2="0" y2="1"><stop offset="0" stop-color="#fff" stop-opacity=".98"/><stop offset="1" stop-color="#fff" stop-opacity=".15"/></linearGradient></defs>
<circle cx="8" cy="8" r="7.3" fill="url(#g37)" stroke="#a85400" stroke-width="1"/>
<ellipse cx="8" cy="4.9" rx="5.2" ry="3.7" fill="url(#g38)"/></svg>
<div class="t o" style="left:273px;top:210px;letter-spacing:.2px">Task A.1.b</div>
<div class="t o" style="left:576px;top:210px;letter-spacing:.68px">2009-01-29</div>
<svg class="abs" style="left:254px;top:234px;" width="16" height="16" viewBox="0 0 16 16"><defs><radialGradient id="g39" cx=".5" cy=".85" r=".75"><stop offset="0" stop-color="#8cff78"/><stop offset=".55" stop-color="#28c828"/><stop offset="1" stop-color="#0c9016"/></radialGradient>
<linearGradient id="g40" x1="0" y1="0" x2="0" y2="1"><stop offset="0" stop-color="#fff" stop-opacity=".98"/><stop offset="1" stop-color="#fff" stop-opacity=".15"/></linearGradient></defs>
<circle cx="8" cy="8" r="7.3" fill="url(#g39)" stroke="#1a6428" stroke-width="1"/>
<ellipse cx="8" cy="4.9" rx="5.2" ry="3.7" fill="url(#g40)"/></svg>
<div class="t gr" style="left:273px;top:232px;letter-spacing:.2px">Task A.1.c</div>
<div class="t gr" style="left:576px;top:232px;letter-spacing:.68px">2009-01-29</div>
<svg class="abs" style="left:224px;top:262px;" width="10" height="9" viewBox="0 0 10 9"><path d="M0 0 L10 0 L5 9 Z" fill="#7c7c7c"/></svg>
<svg class="abs" style="left:238px;top:256px;" width="17" height="14" viewBox="0 0 17 14"><defs><linearGradient id="g41" x1="0" y1="0" x2="0" y2="1"><stop offset="0" stop-color="#ffc060"/><stop offset="1" stop-color="#f07c08"/></linearGradient></defs>
<path d="M.7 12.2 L.7 1.6 Q.7 .7 1.6 .7 L5.4 .7 L6.8 2.4 L12.4 2.4 Q13.2 2.4 13.2 3.2 L13.2 5 L4.6 5 L2 12.6 Z" fill="url(#g41)" stroke="#b45a06" stroke-width="1" stroke-linejoin="round"/>
<path d="M1.4 12.8 L4.8 4.6 L15.6 4.6 L12.2 12.8 Z" fill="url(#g41)" stroke="#b45a06" stroke-width="1" stroke-linejoin="round"/>
<path d="M5.6 5.8 L13.8 5.8" stroke="#ffe0a8" stroke-width=".9"/></svg>
<div class="t o" style="left:257px;top:254px;letter-spacing:.2px">Task A.2</div>
<div class="t o" style="left:576px;top:254px;letter-spacing:.68px">2009-01-29</div>
<svg class="abs" style="left:254px;top:278px;" width="16" height="16" viewBox="0 0 16 16"><defs><radialGradient id="g42" cx=".5" cy=".85" r=".75"><stop offset="0" stop-color="#ffe860"/><stop offset=".55" stop-color="#ffa010"/><stop offset="1" stop-color="#e87400"/></radialGradient>
<linearGradient id="g43" x1="0" y1="0" x2="0" y2="1"><stop offset="0" stop-color="#fff" stop-opacity=".98"/><stop offset="1" stop-color="#fff" stop-opacity=".15"/></linearGradient></defs>
<circle cx="8" cy="8" r="7.3" fill="url(#g42)" stroke="#a85400" stroke-width="1"/>
<ellipse cx="8" cy="4.9" rx="5.2" ry="3.7" fill="url(#g43)"/></svg>
<div class="t o" style="left:273px;top:276px;letter-spacing:.2px">Task A.2.a</div>
<div class="t o" style="left:576px;top:276px;letter-spacing:.68px">2009-01-29</div>
<svg class="abs" style="left:254px;top:300px;" width="16" height="16" viewBox="0 0 16 16"><defs><radialGradient id="g44" cx=".5" cy=".85" r=".75"><stop offset="0" stop-color="#8cff78"/><stop offset=".55" stop-color="#28c828"/><stop offset="1" stop-color="#0c9016"/></radialGradient>
<linearGradient id="g45" x1="0" y1="0" x2="0" y2="1"><stop offset="0" stop-color="#fff" stop-opacity=".98"/><stop offset="1" stop-color="#fff" stop-opacity=".15"/></linearGradient></defs>
<circle cx="8" cy="8" r="7.3" fill="url(#g44)" stroke="#1a6428" stroke-width="1"/>
<ellipse cx="8" cy="4.9" rx="5.2" ry="3.7" fill="url(#g45)"/></svg>
<div class="t w" style="left:273px;top:298px;letter-spacing:.2px">Task A.2.b</div>
<div class="t w" style="left:576px;top:298px;letter-spacing:.68px">2009-01-29</div>
<svg class="abs" style="left:254px;top:322px;" width="16" height="16" viewBox="0 0 16 16"><defs><radialGradient id="g46" cx=".5" cy=".85" r=".75"><stop offset="0" stop-color="#ffe860"/><stop offset=".55" stop-color="#ffa010"/><stop offset="1" stop-color="#e87400"/></radialGradient>
<linearGradient id="g47" x1="0" y1="0" x2="0" y2="1"><stop offset="0" stop-color="#fff" stop-opacity=".98"/><stop offset="1" stop-color="#fff" stop-opacity=".15"/></linearGradient></defs>
<circle cx="8" cy="8" r="7.3" fill="url(#g46)" stroke="#a85400" stroke-width="1"/>
<ellipse cx="8" cy="4.9" rx="5.2" ry="3.7" fill="url(#g47)"/></svg>
<div class="t o" style="left:273px;top:320px;letter-spacing:.2px">Task A.2.c</div>
<div class="t o" style="left:576px;top:320px;letter-spacing:.68px">2009-01-29</div>
<svg class="abs" style="left:224px;top:350px;" width="10" height="9" viewBox="0 0 10 9"><path d="M0 0 L10 0 L5 9 Z" fill="#7c7c7c"/></svg>
<svg class="abs" style="left:238px;top:344px;" width="17" height="14" viewBox="0 0 17 14"><defs><linearGradient id="g48" x1="0" y1="0" x2="0" y2="1"><stop offset="0" stop-color="#c8f488"/><stop offset="1" stop-color="#54c426"/></linearGradient></defs>
<path d="M.7 12.2 L.7 1.6 Q.7 .7 1.6 .7 L5.4 .7 L6.8 2.4 L12.4 2.4 Q13.2 2.4 13.2 3.2 L13.2 5 L4.6 5 L2 12.6 Z" fill="url(#g48)" stroke="#368a1c" stroke-width="1" stroke-linejoin="round"/>
<path d="M1.4 12.8 L4.8 4.6 L15.6 4.6 L12.2 12.8 Z" fill="url(#g48)" stroke="#368a1c" stroke-width="1" stroke-linejoin="round"/>
<path d="M5.6 5.8 L13.8 5.8" stroke="#ecffd0" stroke-width=".9"/></svg>
<div class="t gr" style="left:257px;top:342px;letter-spacing:.2px">Task A.3</div>
<div class="t gr" style="left:576px;top:342px;letter-spacing:.68px">2009-01-29</div>
<svg class="abs" style="left:254px;top:366px;" width="16" height="16" viewBox="0 0 16 16"><defs><radialGradient id="g49" cx=".5" cy=".85" r=".75"><stop offset="0" stop-color="#8cff78"/><stop offset=".55" stop-color="#28c828"/><stop offset="1" stop-color="#0c9016"/></radialGradient>
<linearGradient id="g50" x1="0" y1="0" x2="0" y2="1"><stop offset="0" stop-color="#fff" stop-opacity=".98"/><stop offset="1" stop-color="#fff" stop-opacity=".15"/></linearGradient></defs>
<circle cx="8" cy="8" r="7.3" fill="url(#g49)" stroke="#1a6428" stroke-width="1"/>
<ellipse cx="8" cy="4.9" rx="5.2" ry="3.7" fill="url(#g50)"/></svg>
<div class="t gr" style="left:273px;top:364px;letter-spacing:.2px">Task A.3.a</div>
<div class="t gr" style="left:576px;top:364px;letter-spacing:.68px">2009-01-29</div>
<svg class="abs" style="left:254px;top:388px;" width="16" height="16" viewBox="0 0 16 16"><defs><radialGradient id="g51" cx=".5" cy=".85" r=".75"><stop offset="0" stop-color="#8cff78"/><stop offset=".55" stop-color="#28c828"/><stop offset="1" stop-color="#0c9016"/></radialGradient>
<linearGradient id="g52" x1="0" y1="0" x2="0" y2="1"><stop offset="0" stop-color="#fff" stop-opacity=".98"/><stop offset="1" stop-color="#fff" stop-opacity=".15"/></linearGradient></defs>
<circle cx="8" cy="8" r="7.3" fill="url(#g51)" stroke="#1a6428" stroke-width="1"/>
<ellipse cx="8" cy="4.9" rx="5.2" ry="3.7" fill="url(#g52)"/></svg>
<div class="t gr" style="left:273px;top:386px;letter-spacing:.2px">Task A.3.b</div>
<div class="t gr" style="left:576px;top:386px;letter-spacing:.68px">2009-01-29</div>
<svg class="abs" style="left:532px;top:191px" width="17" height="15" viewBox="0 0 17 15"><defs><linearGradient id="g53" x1="0" y1="0" x2="1" y2="1"><stop offset="0" stop-color="#fffcd8"/><stop offset=".5" stop-color="#fff0a0"/><stop offset="1" stop-color="#ffd840"/></linearGradient></defs>
<path d="M1.6 1.6 L15.6 2.2 L15 10 L11 14 L1 13.4 Z" fill="url(#g53)" stroke="#cc8c2c" stroke-width=".9" stroke-linejoin="round"/>
<path d="M15 10 L11.4 10.4 L11 14 Z" fill="#f4b438" stroke="#cc8c2c" stroke-width=".6"/>
<circle cx="2.7" cy="2.5" r="2.2" fill="#ec1c1c"/></svg>
<svg class="abs" style="left:504px;top:257px" width="17" height="15" viewBox="0 0 17 15"><path d="M.6 13.6 L.6 7.2 L7.6 .5 L10.6 .5 L15.6 4.8 L15.6 6.6 L8.2 13.6 Z" fill="#4c84ea" stroke="#2a5cd2" stroke-width="1" stroke-linejoin="round"/>
<path d="M4.3 10.1 L11.4 3.7" stroke="#fff" stroke-width="2" stroke-linecap="round"/>
<path d="M2.4 8.4 L8.2 2.6" stroke="#8cb4f4" stroke-width=".8"/></svg>
<div class="abs" style="left:659px;top:144px;width:15px;height:260px;background:linear-gradient(90deg,#e4e4e4,#f6f6f6 60%,#f0f0f0);border-left:1px solid #c8c8c8"></div><div class="abs" style="left:660px;top:144px;width:14px;height:243px;border-radius:0 0 7px 7px;background:linear-gradient(90deg,#bdbdbd 0,#dcdcdc 22%,#f2f2f2 55%,#fdfdfd 100%)"></div><div class="abs" style="left:660px;top:144px;width:14px;height:13px;background:linear-gradient(90deg,#e8e8e8,#f8f8f8 60%,#f2f2f2)"></div><svg class="abs" style="left:663.5px;top:148.5px;" width="7" height="6" viewBox="0 0 7 6"><path d="M3.5 0 L7 6 L0 6 Z" fill="#4a4a4a"/></svg><svg class="abs" style="left:663.5px;top:392.5px;" width="7" height="6" viewBox="0 0 7 6"><path d="M0 0 L7 0 L3.5 6 Z" fill="#3c3c3c"/></svg><div class="abs" style="left:660.2px;top:159px;width:13.6px;height:59px;border-radius:7px;background:linear-gradient(rgba(10,40,140,.55) 0,rgba(10,40,140,0) 5px,rgba(10,40,140,0) calc(100% - 5px),rgba(10,40,140,.5) 100%),linear-gradient(90deg,#1f4fbc 0,#4a8af0 14%,#b4d8ff 34%,#7cb6fa 50%,#4488f0 72%,#2c64d4 90%,#1c48b0 100%);box-shadow:0 0 0 .5px #1c44a4,inset 0 0 0 1px rgba(20,50,150,.55)"></div>
<div class="abs" style="left:202px;top:404px;width:473px;height:1px;background:#b0b0b0"></div>
<svg class="abs" style="left:334.4px;top:405.4px;" width="6" height="6" viewBox="0 0 6 6"><path d="M.6 4.4 Q2.6 -1.4 4.6 4.4 Q2.6 2.2 .6 4.4 Z" fill="#2a2a2a" stroke="#2a2a2a" stroke-width=".5"/></svg>
<div class="abs" style="left:0px;top:412px;width:675px;height:1px;background:#b0b0b0"></div>
<div class="abs ps" style="left:0px;top:413px;width:675px;height:171px"></div>
<div class="cap g" style="left:1px;top:413px;width:673px;height:18px;line-height:18px">Effort</div>
<div class="abs" style="left:646px;top:417px;width:9.5px;height:8.5px;border:1px solid #fff;border-top-width:2px;opacity:.95"></div><svg class="abs" style="left:657px;top:415.5px;" width="14" height="14" viewBox="0 0 14 14"><circle cx="7" cy="7" r="6.6" fill="#fff"/><path d="M4.4 4.4 L9.6 9.6 M9.6 4.4 L4.4 9.6" stroke="#bdbdbd" stroke-width="2.1" stroke-linecap="round"/></svg>
<svg class="abs" style="left:5px;top:445px;" width="17" height="17" viewBox="0 0 17 17"><g opacity=".42">
<path d="M6.2 11.4 L9.4 1.6 Q10.6 1.2 11 2.4 L8.6 11 Z" fill="#e4e4e8" stroke="#8a8a92" stroke-width=".7" stroke-linejoin="round"/>
<path d="M4.4 8.2 L14.6 4.6 Q15.8 5 15.4 6.2 L6 10.2 Z" fill="#f0f0f2" stroke="#8a8a92" stroke-width=".7" stroke-linejoin="round"/>
<ellipse cx="2.9" cy="9" rx="1.6" ry="2.1" transform="rotate(-65 2.9 9)" fill="#f6b0a4" stroke="#de4034" stroke-width="1.7"/>
<ellipse cx="6.5" cy="13.2" rx="1.7" ry="2" transform="rotate(-20 6.5 13.2)" fill="#f6b0a4" stroke="#de4034" stroke-width="1.7"/>
</g></svg>
<svg class="abs" style="left:27px;top:445px;" width="17" height="17" viewBox="0 0 17 17"><defs><linearGradient id="g54" x1="0" y1="0" x2="1" y2="1"><stop offset="0" stop-color="#ffffff"/><stop offset="1" stop-color="#c4dcf4"/></linearGradient></defs><g opacity=".5">
<rect x="3.5" y=".5" width="12" height="14" fill="url(#g54)" stroke="#4d86c4" stroke-width=".9"/>
<rect x=".5" y="4.5" width="9" height="11" fill="url(#g54)" stroke="#4d86c4" stroke-width=".9"/></g></svg>
<svg class="abs" style="left:50px;top:445px;" width="15" height="17" viewBox="0 0 15 17"><defs><linearGradient id="g55" x1="0" y1="0" x2="1" y2="1"><stop offset="0" stop-color="#ffffff"/><stop offset="1" stop-color="#cfe0f4"/></linearGradient></defs>
<rect x=".6" y="1.8" width="13.3" height="13.6" rx=".8" fill="#fde6cc" stroke="#f3bc84" stroke-width="1"/>
<rect x="2.6" y="4" width="9.4" height="9.6" fill="url(#g55)" stroke="#d8e2ee" stroke-width=".5"/>
<rect x="4.2" y=".4" width="6" height="2.9" rx="1" fill="#9ce29e" stroke="#74cc7c" stroke-width=".5"/></svg>
<div class="sep" style="left:73px;top:445px"></div>
<svg class="abs" style="left:82px;top:445px;" width="18" height="18" viewBox="0 0 18 18"><defs><linearGradient id="g56" x1="0" y1="0" x2="1" y2="1"><stop offset="0" stop-color="#ffffff"/><stop offset=".55" stop-color="#f8fbff"/><stop offset="1" stop-color="#cfe2f6"/></linearGradient></defs><rect x=".5" y=".5" width="13.5" height="15" fill="url(#g56)" stroke="#4d86c4" stroke-width=".9"/><defs><radialGradient id="g57"><stop offset="0" stop-color="#ffff9a"/><stop offset=".38" stop-color="#fde07a"/><stop offset=".6" stop-color="#f4b060"/><stop offset="1" stop-color="#f0a868"/></radialGradient></defs><polygon points="12.02,7.68 12.91,9.31 14.76,9.50 14.24,11.28 15.42,12.72 13.79,13.61 13.60,15.46 11.82,14.94 10.38,16.12 9.49,14.49 7.64,14.30 8.16,12.52 6.98,11.08 8.61,10.19 8.80,8.34 10.58,8.86" fill="url(#g57)" stroke="#eeaa6c" stroke-width=".4" stroke-linejoin="round"/></svg>
<svg class="abs" style="left:104px;top:445px;" width="16" height="17" viewBox="0 0 16 17"><defs><linearGradient id="g58" x1="0" y1="0" x2="1" y2="1"><stop offset="0" stop-color="#ffffff"/><stop offset=".55" stop-color="#f8fbff"/><stop offset="1" stop-color="#cfe2f6"/></linearGradient></defs><g opacity=".45"><rect x=".5" y=".5" width="13.5" height="15" fill="url(#g58)" stroke="#4d86c4" stroke-width=".9"/><path d="M3 4.6 L3 3 L4.6 3 M9.9 3 L11.5 3 L11.5 4.6 M3 11.4 L3 13 L4.6 13 M9.9 13 L11.5 13 L11.5 11.4" fill="none" stroke="#44689a" stroke-width=".8" opacity=".8"/></g></svg>
<svg class="abs" style="left:126px;top:445px;" width="16" height="17" viewBox="0 0 16 17"><defs><linearGradient id="g59" x1="0" y1="0" x2="1" y2="1"><stop offset="0" stop-color="#ffffff"/><stop offset=".55" stop-color="#f8fbff"/><stop offset="1" stop-color="#cfe2f6"/></linearGradient></defs><g opacity=".45"><rect x=".5" y=".5" width="13.5" height="15" fill="url(#g59)" stroke="#4d86c4" stroke-width=".9"/><path d="M4.1 4.9 L10.3 11 M10.3 4.9 L4.1 11" stroke="#ea2424" stroke-width="2.3" stroke-linecap="round"/></g></svg>
<div class="sep" style="left:149px;top:445px"></div>
<div class="abs" style="left:158px;top:441px;width:151px;height:21px;border-radius:5px;border:1px solid #7e7e7e;border-top-color:#6a6a6a;background:linear-gradient(#fff 0,#f4f4f4 45%,#e6e6e6 50%,#f6f6f6 100%);box-shadow:0 1px 1.5px rgba(0,0,0,.3);overflow:hidden"><span class="abs" style="left:7px;top:1px;line-height:18px;font-size:13px;white-space:nowrap;letter-spacing:-0.25px">Effort per day</span><div class="abs" style="right:-1px;top:-1px;width:21px;height:21px;border-radius:0 5px 5px 0;border:1px solid #2a4fb8;background:linear-gradient(#a4cdfc 0,#6ea8f4 42%,#3a7ee8 52%,#5ea6f6 80%,#9ad6ff 100%)"></div><svg class="abs" style="right:5.2px;top:3px" width="9" height="14" viewBox="0 0 9 14"><path d="M4.5 1.2 L7.1 4.9 L1.9 4.9 Z M4.5 12.6 L7.1 8.9 L1.9 8.9 Z" fill="#000"/></svg></div>
<div class="sep" style="left:317px;top:445px"></div>
<div class="abs" style="left:325px;top:445px;width:100px;height:22px;;width:100px;overflow:hidden"><div class="abs" style="left:0;top:0;width:100px;height:22px;border-radius:11px;border:1px solid #a0a0a0;border-top-color:#7c7c7c;border-bottom-color:#c4c4c4;background:#fff;box-shadow:inset 0 1px 2px rgba(0,0,0,.25)"></div><svg class="abs" style="left:4.5px;top:4.5px;" width="18" height="14" viewBox="0 0 18 14"><circle cx="5.2" cy="5.2" r="3.6" fill="none" stroke="#5a5a5a" stroke-width="2"/><path d="M7.8 7.8 L11 11.4" stroke="#5a5a5a" stroke-width="2.2" stroke-linecap="round"/><path d="M12.4 5.6 L17 5.6 L14.7 8.4 Z" fill="#5a5a5a"/></svg><span class="abs" style="left:25px;top:3px;line-height:17px;font-size:13px;color:#959595;letter-spacing:-.55px">Search</span></div>
<div class="white" style="left:1px;top:477px;width:673px;height:89px"></div>
<div class="hdr" style="left:1px;top:477px;width:673px;height:16px;font-size:11px"><span class="abs" style="left:4px;top:.5px;line-height:15px">Period</span><div class="hsep" style="left:91px;height:14px"></div><span class="abs" style="left:96.5px;top:.5px;line-height:15px">Task</span><div class="hsep" style="left:456px;height:14px"></div><span class="abs r" style="left:457px;width:95.5px;top:.5px;line-height:15px;letter-spacing:-.3px">Time spent</span><div class="hsep" style="left:556px;height:14px"></div><span class="abs r" style="left:556px;width:97px;top:.5px;line-height:15px;letter-spacing:-.2px">Revenue</span><div class="hsep" style="left:657px;height:14px"></div></div>
<div class="abs" style="left:659px;top:478px;width:15px;height:14px;background:linear-gradient(#f2f2f2,#e9e9e9)"></div>
<div class="e" style="left:.5px;top:494.5px;letter-spacing:.6px">2009-01-29</div>
<div class="e" style="left:92px;top:494.5px;letter-spacing:.3px">Task A -&gt; Task A.2 -&gt; Task A.2.a</div>
<div class="e r" style="left:460px;width:90.5px;top:494.5px">0:00:01</div>
<div class="e r" style="left:560px;width:90.5px;top:494.5px;letter-spacing:.4px">0.00</div>
<div class="e" style="left:92px;top:513.5px;letter-spacing:.3px">Task A -&gt; Task A.2</div>
<div class="e r" style="left:560px;width:90.5px;top:513.5px;letter-spacing:.4px">0.00</div>
<div class="e" style="left:92px;top:532.5px;letter-spacing:.3px">Task A -&gt; Task A.1 -&gt; Task A.1.b</div>
<div class="e r" style="left:460px;width:90.5px;top:532.5px">0:00:02</div>
<div class="e r" style="left:560px;width:90.5px;top:532.5px;letter-spacing:.4px">0.00</div>
<div class="e" style="left:92px;top:551.5px;letter-spacing:.3px">Task A -&gt; Task A.1</div>
<div class="e r" style="left:560px;width:90.5px;top:551.5px;letter-spacing:.4px">0.00</div>
<div class="abs" style="left:659px;top:494px;width:15px;height:71px;background:linear-gradient(90deg,#e4e4e4,#f6f6f6 60%,#f0f0f0);border-left:1px solid #c8c8c8"></div><div class="abs" style="left:660px;top:494px;width:14px;height:54px;border-radius:0 0 7px 7px;background:linear-gradient(90deg,#bdbdbd 0,#dcdcdc 22%,#f2f2f2 55%,#fdfdfd 100%)"></div><div class="abs" style="left:660px;top:494px;width:14px;height:13px;background:linear-gradient(90deg,#e8e8e8,#f8f8f8 60%,#f2f2f2)"></div><svg class="abs" style="left:663.5px;top:498.5px;" width="7" height="6" viewBox="0 0 7 6"><path d="M3.5 0 L7 6 L0 6 Z" fill="#4a4a4a"/></svg><svg class="abs" style="left:663.5px;top:553.5px;" width="7" height="6" viewBox="0 0 7 6"><path d="M0 0 L7 0 L3.5 6 Z" fill="#3c3c3c"/></svg><div class="abs" style="left:660.2px;top:510.5px;width:13.6px;height:20px;border-radius:7px;background:linear-gradient(rgba(10,40,140,.55) 0,rgba(10,40,140,0) 5px,rgba(10,40,140,0) calc(100% - 5px),rgba(10,40,140,.5) 100%),linear-gradient(90deg,#1f4fbc 0,#4a8af0 14%,#b4d8ff 34%,#7cb6fa 50%,#4488f0 72%,#2c64d4 90%,#1c48b0 100%);box-shadow:0 0 0 .5px #1c44a4,inset 0 0 0 1px rgba(20,50,150,.55)"></div>
<div class="abs ps" style="left:0;top:565px;width:675px;height:19px;border-top:1px solid #acacac"></div>
<div class="abs" style="left:0;top:566px;width:675px;height:1px;background:#d4d4d4"></div>
<div class="abs" style="left:0;top:477px;width:1px;height:89px;background:#b4b4b4"></div>
<div class="abs" style="left:674px;top:477px;width:1px;height:89px;background:#b4b4b4"></div>
<div class="abs" style="left:5px;top:567px;font-size:11px;line-height:15px;white-space:nowrap;letter-spacing:-.09px">Tasks: 1 selected, 39 visible, 39 total</div>
<div class="abs" style="left:342px;top:567px;font-size:11px;line-height:15px;white-space:nowrap;letter-spacing:-.24px">Status: 0 over due, 0 inactive, 6 completed</div>
<svg class="abs" style="left:660px;top:569px;" width="14" height="14" viewBox="0 0 14 14"><path d="M13 1 L1 13 M13 5 L5 13 M13 9 L9 13" stroke="#8a8a8a" stroke-width="1"/><path d="M13.8 1.8 L1.8 13.8 M13.8 5.8 L5.8 13.8 M13.8 9.8 L9.8 13.8" stroke="#fff" stroke-width=".8"/></svg>
</div>
</body></html>
